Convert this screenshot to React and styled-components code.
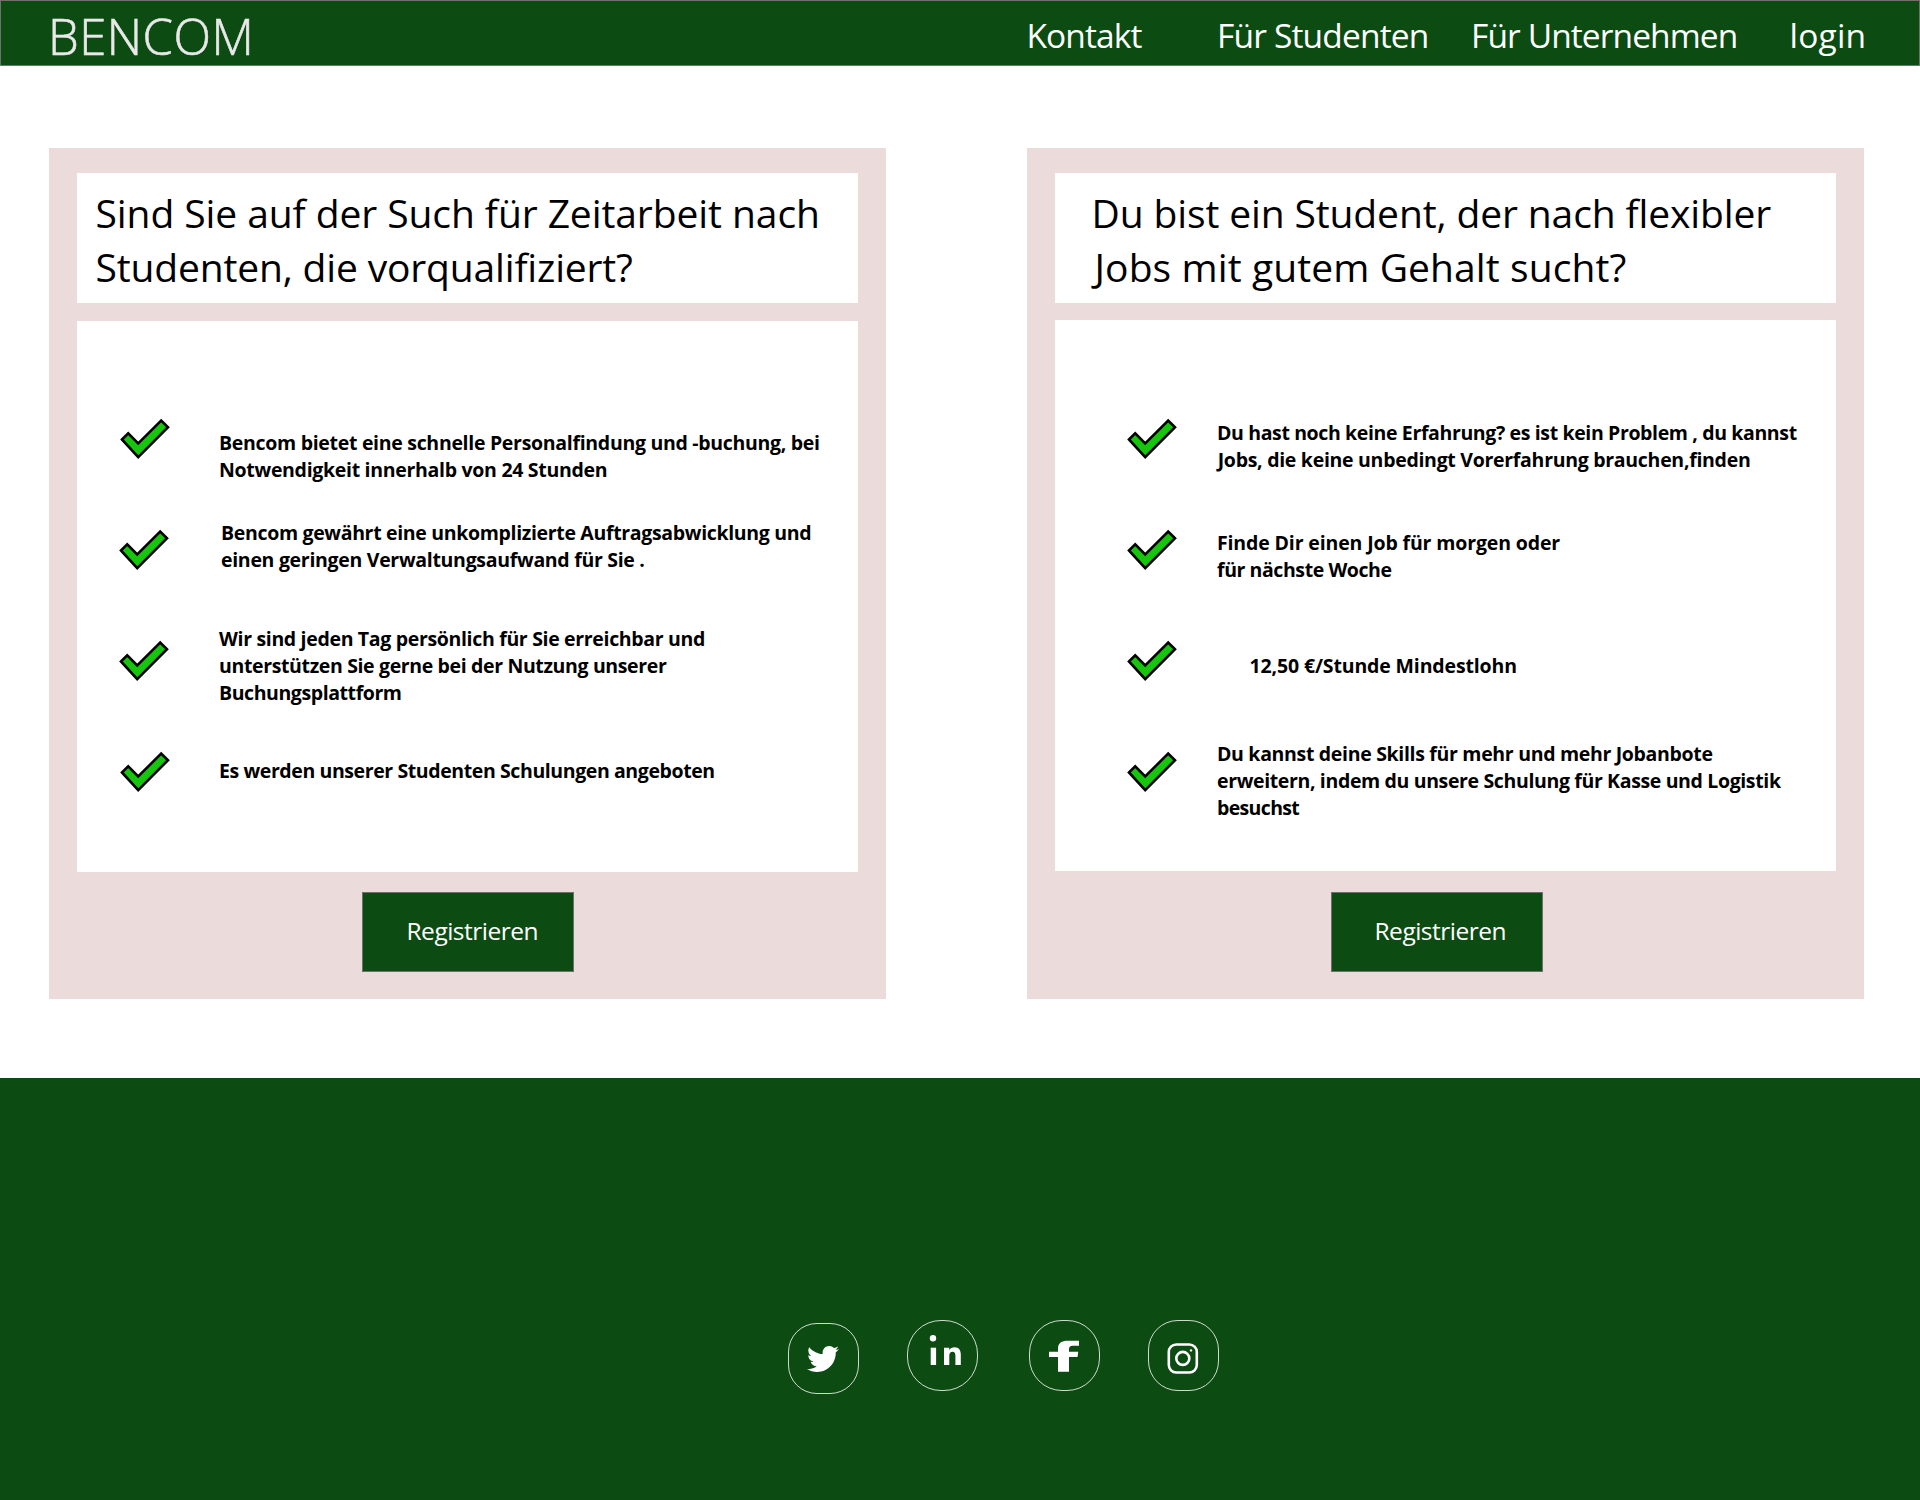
import React from "react";
import styled, { createGlobalStyle } from "styled-components";
import { FaTwitter } from "react-icons/fa";

const GREEN = "#0c4b12";
const PINK = "#ebdbdb";
const BORDER = "#707070";

const GlobalStyle = createGlobalStyle`
  *, *::before, *::after { box-sizing: border-box; }
  body {
    margin: 0;
    background: #fff;
    color: #000;
    font-family: "Open Sans", "Noto Sans", sans-serif;
  }
`;

const Page = styled.div`
  width: 1920px;
  height: 1500px;
  display: flex;
  flex-direction: column;
  overflow: hidden;
`;

const Header = styled.header`
  height: 66px;
  flex: none;
  display: grid;
  grid-template-columns: 978.5px 1fr;
  padding-left: 47px;
  background: ${GREEN};
  border: 1px solid ${BORDER};
`;

const Brand = styled.div`
  padding-top: 5px;
  font-size: 49px;
  font-weight: 300;
  line-height: 60px;
  letter-spacing: 0.5px;
  color: #e9e9e9;
  -webkit-text-stroke: 0.6px #e9e9e9;
`;

const Nav = styled.nav`
  display: grid;
  grid-template-columns: 190.5px 254px 318.5px auto;
  padding-top: 11px;
`;

const NavLink = styled.a`
  font-size: 33.5px;
  font-weight: 400;
  line-height: 46px;
  letter-spacing: ${(p) => p.$spacing}px;
  color: #fff;
  white-space: nowrap;
`;

const Main = styled.main`
  height: 1012px;
  flex: none;
  display: flex;
  align-items: flex-start;
  gap: 141px;
  padding: 82px 0 0 49px;
`;

const Card = styled.section`
  width: 837px;
  height: 851px;
  display: flex;
  flex-direction: column;
  padding: 25px 28px 0;
  background: ${PINK};
`;

const CardTitle = styled.h2`
  height: 130px;
  margin: 0 0 ${(p) => p.$gap}px;
  padding: 13px 0 0 ${(p) => p.$inset}px;
  background: #fff;
  font-size: 39px;
  font-weight: 400;
  line-height: 54px;
`;

const Line = styled.span`
  display: block;
  white-space: nowrap;
  letter-spacing: ${(p) => p.$spacing}px;
  padding-left: ${(p) => p.$indent || 0}px;
`;

const Benefits = styled.ul`
  height: 551px;
  margin: 0;
  padding: ${(p) => p.$top}px 0 0 ${(p) => p.$inset}px;
  list-style: none;
  background: #fff;
`;

const Benefit = styled.li`
  height: 111px;
  display: grid;
  grid-template-columns: ${(p) => p.$column}px 1fr;
`;

const CheckCell = styled.div`
  padding: 16px 0 0 ${(p) => p.$shift}px;
`;

const BenefitText = styled.p`
  margin: 0;
  padding-top: ${(p) => p.$drop}px;
  font-size: 19.5px;
  font-weight: 700;
  line-height: 27px;
`;

const RegisterButton = styled.button`
  width: 212px;
  height: 80px;
  margin: auto 0 27px ${(p) => p.$offset}px;
  padding: 0 0 2px ${(p) => p.$inset}px;
  background: ${GREEN};
  border: 1px solid ${BORDER};
  color: #fff;
  font-family: inherit;
  font-size: 24.5px;
  line-height: 34px;
  letter-spacing: -0.5px;
  text-align: left;
`;

const Footer = styled.footer`
  flex: 1;
  display: flex;
  align-items: flex-start;
  padding: 242px 0 0 788px;
  background: ${GREEN};
`;

const Badge = styled.a`
  width: 71px;
  height: 71px;
  flex: none;
  display: grid;
  place-items: center;
  margin: ${(p) => p.$drop || 0}px ${(p) => p.$gap || 0}px 0 0;
  border: 1px solid rgba(255, 255, 255, 0.8);
  border-radius: ${(p) => p.$radius}px;
  color: #fff;
`;

const Glyph = styled.svg`
  display: block;
  width: 69px;
  height: 69px;
`;

const Bird = styled(FaTwitter)`
  width: 32px;
  height: 32px;
  margin: 1px 2px 0 0;
`;

const Check = () => (
  <svg width="50" height="40" viewBox="0 0 50 40" display="block" overflow="visible">
    <path
      d="M2 20.5 L8.2 14.4 L18.2 24.4 L41.2 1.6 L48 8.2 L18.2 38.100 Z"
      fill="#16c60c"
      stroke="#000"
      strokeWidth="2.600"
    />
  </svg>
);

const cards = [
  {
    titleInset: 18.5,
    titleGap: 18,
    title: [
      { text: "Sind Sie auf der Such für Zeitarbeit nach", spacing: -0.08 },
      { text: "Studenten, die vorqualifiziert?", spacing: -0.16 },
    ],
    listInset: 42,
    listTop: 82,
    column: 100,
    buttonOffset: 285,
    buttonInset: 43.5,
    items: [
      {
        shift: 0.5, drop: 26,
        lines: [
          { text: "Bencom bietet eine schnelle Personalfindung und -buchung, bei", spacing: -0.3 },
          { text: "Notwendigkeit innerhalb von 24 Stunden", spacing: -0.3 },
        ],
      },
      {
        shift: 0, drop: 5,
        lines: [
          { text: "Bencom gewährt eine unkomplizierte Auftragsabwicklung und", spacing: -0.33, indent: 2 },
          { text: "einen geringen Verwaltungsaufwand für Sie .", spacing: -0.3, indent: 2 },
        ],
      },
      {
        shift: 0, drop: 0,
        lines: [
          { text: "Wir sind jeden Tag persönlich für Sie erreichbar und", spacing: -0.33 },
          { text: "unterstützen Sie gerne bei der Nutzung unserer", spacing: -0.36 },
          { text: "Buchungsplattform", spacing: -0.42 },
        ],
      },
      {
        shift: 0.5, drop: 21,
        lines: [{ text: "Es werden unserer Studenten Schulungen angeboten", spacing: -0.4 }],
      },
    ],
  },
  {
    titleInset: 36.5,
    titleGap: 17,
    title: [
      { text: "Du bist ein Student, der nach flexibler", spacing: -0.12 },
      { text: "Jobs mit gutem Gehalt sucht?", spacing: 0.1, indent: 3 },
    ],
    listInset: 71.5,
    listTop: 83,
    column: 90.5,
    buttonOffset: 276,
    buttonInset: 42.5,
    items: [
      {
        shift: 0, drop: 16,
        lines: [
          { text: "Du hast noch keine Erfahrung? es ist kein Problem , du kannst", spacing: -0.37 },
          { text: "Jobs, die keine unbedingt Vorerfahrung brauchen,finden", spacing: -0.29, indent: 0.7 },
        ],
      },
      {
        shift: 0, drop: 15,
        lines: [
          { text: "Finde Dir einen Job für morgen oder", spacing: -0.14 },
          { text: "für nächste Woche", spacing: -0.42 },
        ],
      },
      {
        shift: 0, drop: 27,
        lines: [{ text: "12,50 €/Stunde Mindestlohn", spacing: -0.14, indent: 32.5 }],
      },
      {
        shift: 0, drop: 4,
        lines: [
          { text: "Du kannst deine Skills für mehr und mehr Jobanbote", spacing: -0.32 },
          { text: "erweitern, indem du unsere Schulung für Kasse und Logistik", spacing: -0.36 },
          { text: "besuchst", spacing: -0.65 },
        ],
      },
    ],
  },
];

const Lines = ({ lines }) =>
  lines.map((line) => (
    <Line key={line.text} $spacing={line.spacing} $indent={line.indent}>
      {line.text}
    </Line>
  ));

export default function App() {
  return (
    <Page>
      <GlobalStyle />
      <Header>
        <Brand>BENCOM</Brand>
        <Nav>
          <NavLink $spacing={-0.9}>Kontakt</NavLink>
          <NavLink $spacing={-0.83}>Für Studenten</NavLink>
          <NavLink $spacing={-0.9}>Für Unternehmen</NavLink>
          <NavLink $spacing={0.2}>login</NavLink>
        </Nav>
      </Header>

      <Main>
        {cards.map((card) => (
          <Card key={card.title[0].text}>
            <CardTitle $inset={card.titleInset} $gap={card.titleGap}>
              <Lines lines={card.title} />
            </CardTitle>
            <Benefits $inset={card.listInset} $top={card.listTop}>
              {card.items.map((item) => (
                <Benefit key={item.lines[0].text} $column={card.column}>
                  <CheckCell $shift={item.shift}>
                    <Check />
                  </CheckCell>
                  <BenefitText $drop={item.drop}>
                    <Lines lines={item.lines} />
                  </BenefitText>
                </Benefit>
              ))}
            </Benefits>
            <RegisterButton $offset={card.buttonOffset} $inset={card.buttonInset}>
              Registrieren
            </RegisterButton>
          </Card>
        ))}
      </Main>

      <Footer>
        <Badge $radius={29} $drop={3} $gap={48}>
          <Bird />
        </Badge>
        <Badge $radius={34} $gap={51}>
          <Glyph viewBox="2 1 69 69" fill="#fff">
            <circle cx="27" cy="18.3" r="3.2" />
            <rect x="24.7" y="27.7" width="5.4" height="17.3" />
            <path d="M38 27.7h5.2v2.2c1.2-1.8 3-2.6 5.2-2.6 4.4 0 6.4 2.7 6.4 7.3V45h-5.4v-9.4c0-2.5-.9-3.9-2.8-3.9-2.1 0-3.3 1.5-3.3 4V45H38z" />
          </Glyph>
        </Badge>
        <Badge $radius={33} $gap={48}>
          <Glyph viewBox="1.300 1 69 69" fill="#fff">
            <path d="M20.3 31.7H29.3V28.5C29.3 23 33 20.7 39 20.7H50.3V25.7H44C41.3 25.7 40.3 27 40.3 29V31.7H49.6L48.8 37H40.3V51.8H29.3V37H20.3Z" />
          </Glyph>
        </Badge>
        <Badge $radius={30}>
          <Glyph viewBox="1.700 1 69 69" fill="none" stroke="#fff" strokeWidth="2.6">
            <rect x="21.5" y="24.5" width="28" height="28" rx="7.5" />
            <circle cx="35.5" cy="38.4" r="6.5" />
            <circle cx="43.7" cy="30.4" r="1.2" fill="#fff" stroke="none" />
          </Glyph>
        </Badge>
      </Footer>
    </Page>
  );
}
